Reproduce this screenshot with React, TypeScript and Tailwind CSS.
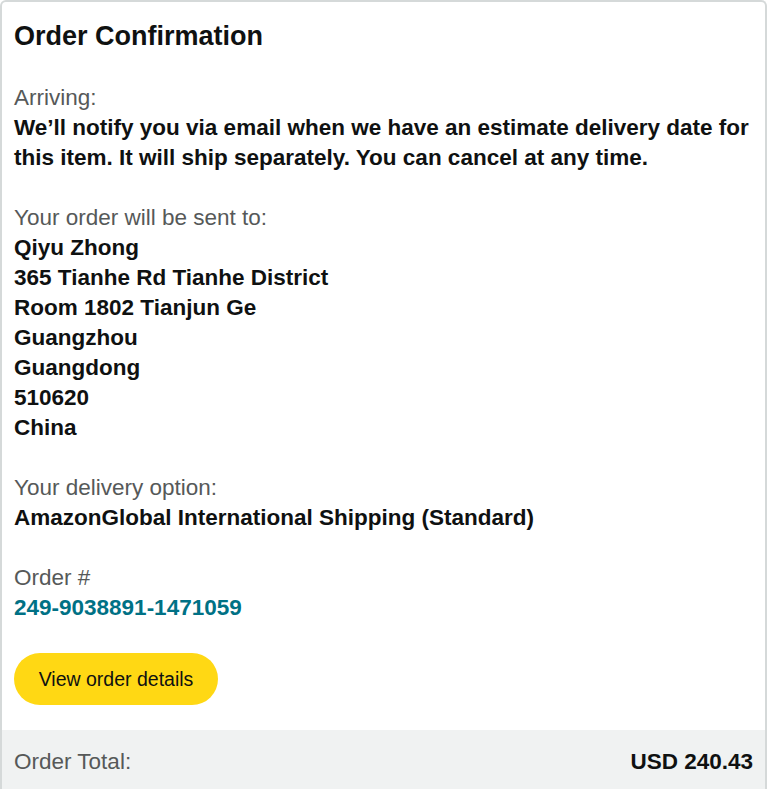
const address = [
  'Qiyu Zhong',
  '365 Tianhe Rd Tianhe District',
  'Room 1802 Tianjun Ge',
  'Guangzhou',
  'Guangdong',
  '510620',
  'China',
]

function Label({ children }: { children: React.ReactNode }) {
  return <div className="text-[#565959]">{children}</div>
}

export default function App() {
  return (
    <div className="bg-white font-['Liberation_Sans',Arial,sans-serif] text-[22.5px] leading-[30px] text-[#0f1111]">
      <div className="w-[767px] border-2 border-b-0 border-[#d5d9d9] rounded-t-[6px] overflow-hidden">
        <div className="px-3 pt-[18px] pb-[25px]">
          <h1 className="text-[27px] leading-[32px] font-bold mb-[31px]">Order Confirmation</h1>

          {/* Arriving */}
          <section>
            <Label>Arriving:</Label>
            <div className="font-bold">
              We’ll notify you via email when we have an estimate delivery date for this item. It will ship
              separately. You can cancel at any time.
            </div>
          </section>

          {/* Address */}
          <section className="mt-[30px]">
            <Label>Your order will be sent to:</Label>
            {address.map((line) => (
              <div key={line} className="font-bold">
                {line}
              </div>
            ))}
          </section>

          {/* Delivery */}
          <section className="mt-[30px]">
            <Label>Your delivery option:</Label>
            <div className="font-bold">AmazonGlobal International Shipping (Standard)</div>
          </section>

          {/* Order number */}
          <section className="mt-[30px]">
            <Label>Order #</Label>
            <a href="#" className="font-bold text-[#007185]">
              249-9038891-1471059
            </a>
          </section>

          <button className="mt-[30px] h-[52px] w-[204px] rounded-full bg-[#ffd814] text-[19.5px] text-[#0f1111]">
            View order details
          </button>
        </div>

        <div className="flex items-center justify-between bg-[#f0f2f2] px-3 pt-[17px] pb-[17px]">
          <span className="text-[#565959]">Order Total:</span>
          <span className="font-bold">USD 240.43</span>
        </div>
      </div>
    </div>
  )
}
